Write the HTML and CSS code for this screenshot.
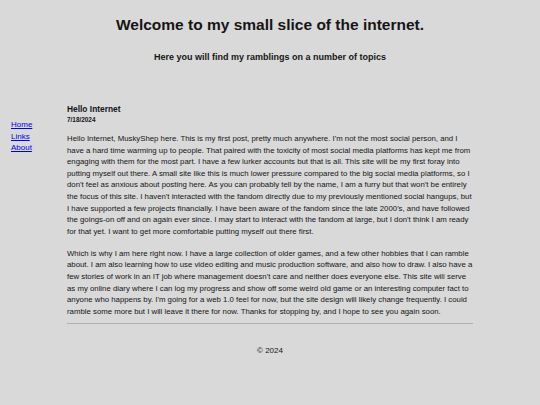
FILE: index.html
```html
<!DOCTYPE html>
<html lang="en">
<head>
<meta charset="utf-8">
<title>Welcome to my small slice of the internet.</title>
<link rel="stylesheet" href="styles.css">
</head>
<body>
<header class="site-header">
  <h1 class="site-title">Welcome to my small slice of the internet.</h1>
  <h3 class="site-subtitle">Here you will find my ramblings on a number of topics</h3>
</header>
<div class="layout">
  <nav class="side-nav">
    <a href="#">Home</a>
    <a href="#">Links</a>
    <a href="#">About</a>
  </nav>
  <main class="content">
    <article class="post">
      <h4 class="post-title">Hello Internet</h4>
      <h6 class="post-date">7/18/2024</h6>
      <p>Hello Internet, MuskyShep here. This is my first post, pretty much anywhere. I'm not the most social person, and I have a hard time warming up to people. That paired with the toxicity of most social media platforms has kept me from engaging with them for the most part. I have a few lurker accounts but that is all. This site will be my first foray into putting myself out there. A small site like this is much lower pressure compared to the big social media platforms, so I don't feel as anxious about posting here. As you can probably tell by the name, I am a furry but that won't be entirely the focus of this site. I haven't interacted with the fandom directly due to my previously mentioned social hangups, but I have supported a few projects financially. I have been aware of the fandom since the late 2000's, and have followed the goings-on off and on again ever since. I may start to interact with the fandom at large, but I don't think I am ready for that yet. I want to get more comfortable putting myself out there first.</p>
      <p>Which is why I am here right now. I have a large collection of older games, and a few other hobbies that I can ramble about. I am also learning how to use video editing and music production software, and also how to draw. I also have a few stories of work in an IT job where management doesn't care and neither does everyone else. This site will serve as my online diary where I can log my progress and show off some weird old game or an interesting computer fact to anyone who happens by. I'm going for a web 1.0 feel for now, but the site design will likely change frequently. I could ramble some more but I will leave it there for now. Thanks for stopping by, and I hope to see you again soon.</p>
    </article>
    <hr class="divider">
  </main>
</div>
<footer class="site-footer">&copy; 2024</footer>
</body>
</html>
```
FILE: styles.css
```css
html, body {
  margin: 0;
  padding: 0;
  background: #d9d9d9;
  color: #151515;
  font-family: "Liberation Sans", Arial, sans-serif;
}
.site-header {
  text-align: center;
  padding-top: 13px;
}
.site-title {
  margin: 0;
  font-size: 15.5px;
  font-weight: bold;
  line-height: 24px;
}
.site-subtitle {
  margin: 13px 0 0;
  font-size: 9px;
  font-weight: bold;
  line-height: 14px;
}
.layout {
  display: grid;
  grid-template-columns: 67px 1fr 67px;
  margin-top: 36px;
}
.side-nav {
  display: flex;
  flex-direction: column;
  padding: 19px 0 0 11px;
  font-size: 8px;
  line-height: 11.5px;
}
.side-nav a {
  color: #0000ee;
}
.content {
  font-size: 7.8px;
  line-height: 11.6px;
  padding-top: 3px;
}
.post-title {
  margin: 0;
  font-size: 8.4px;
  line-height: 12px;
}
.post-date {
  margin: 0;
  font-size: 6.4px;
  line-height: 10px;
}
.post p {
  margin: 8px 0 0;
}
.post p + p {
  margin-top: 10.4px;
}
.divider {
  margin: 6px 0 0;
  border: 0;
  border-top: 1px solid #b0b0b0;
  height: 0;
}
.site-footer {
  text-align: center;
  margin-top: 21px;
  font-size: 8px;
  line-height: 12px;
}
```
